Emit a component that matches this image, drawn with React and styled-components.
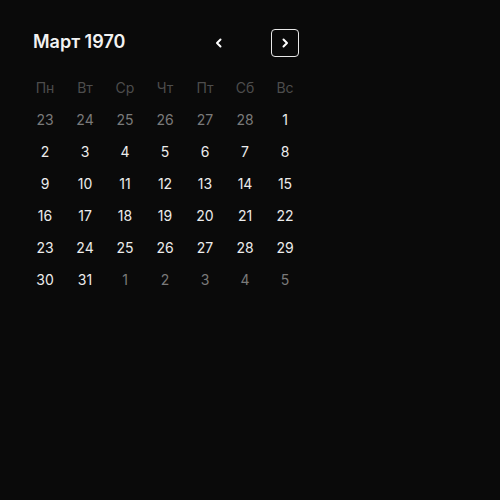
import React, { useState } from 'react'
import styled, { createGlobalStyle } from 'styled-components'

const GlobalStyle = createGlobalStyle`
    html, body {margin: 0; padding: 0; background: #0a0a0a; height: 100%;}
    #root {min-height: 100vh; background: #0a0a0a;}
    * {box-sizing: border-box;}
`

const WEEKDAYS = ['Пн', 'Вт', 'Ср', 'Чт', 'Пт', 'Сб', 'Вс']

const buildDays = () => {
    const prev = [23, 24, 25, 26, 27, 28].map(d => ({ d, out: true }))
    const cur = Array.from({ length: 31 }, (_, i) => ({ d: i + 1, out: false }))
    const next = [1, 2, 3, 4, 5].map(d => ({ d, out: true }))
    return [...prev, ...cur, ...next]
}

const Chevron = ({ dir }) => (
    <svg width="12" height="12" viewBox="0 0 12 12" fill="none">
        <path d={dir === 'left' ? 'M7.5 2.5L4 6l3.5 3.5' : 'M4.5 2.5L8 6l-3.5 3.5'} stroke="#fff" strokeWidth="2" strokeLinecap="round" strokeLinejoin="round" />
    </svg>
)

const App = () => {
    const [days] = useState(buildDays)
    return (
        <Page>
            <GlobalStyle />
            <Calendar>
                <Header>
                    <Title>Март 1970</Title>
                    <NavBtn aria-label="prev"><Chevron dir="left" /></NavBtn>
                    <NavBtn aria-label="next" $active><Chevron dir="right" /></NavBtn>
                </Header>
                <Grid>
                    {WEEKDAYS.map(w => <WeekDay key={w}>{w}</WeekDay>)}
                    {days.map((x, i) => <Day key={i} $out={x.out}>{x.d}</Day>)}
                </Grid>
            </Calendar>
        </Page>
    )
}

const Page = styled.div`
    min-height: 100vh; background: #0a0a0a; padding: 29px 25px;
    font-family: Inter, "Noto Sans", sans-serif;
`
const Calendar = styled.div`
    width: 280px;
`
const Header = styled.div`
    display: flex; align-items: center; height: 28px; padding: 0 6px 0 8px; margin-bottom: 14px;
`
const Title = styled.h2`
    flex-grow: 1; margin: 0 0 3px; font-size: 18px; font-weight: 600; color: #f2f2f2; letter-spacing: 0;
`
const NavBtn = styled.button`
    width: 28px; height: 28px; display: flex; align-items: center; justify-content: center;
    background: transparent; padding: 0; cursor: pointer; border-radius: 4px;
    border: 1px solid ${p => p.$active ? '#e8e8e8' : 'transparent'};
    & + & {margin-left: 38px;}
`
const Grid = styled.div`
    display: grid; grid-template-columns: repeat(7, 40px); grid-auto-rows: 32px;
`
const WeekDay = styled.div`
    display: flex; align-items: center; justify-content: center;
    font-size: 14px; color: #4d4d4d;
`
const Day = styled.div`
    display: flex; align-items: center; justify-content: center;
    font-size: 14px; font-weight: 400; color: ${p => p.$out ? '#7a7a7a' : '#ececec'};
`

export default App
